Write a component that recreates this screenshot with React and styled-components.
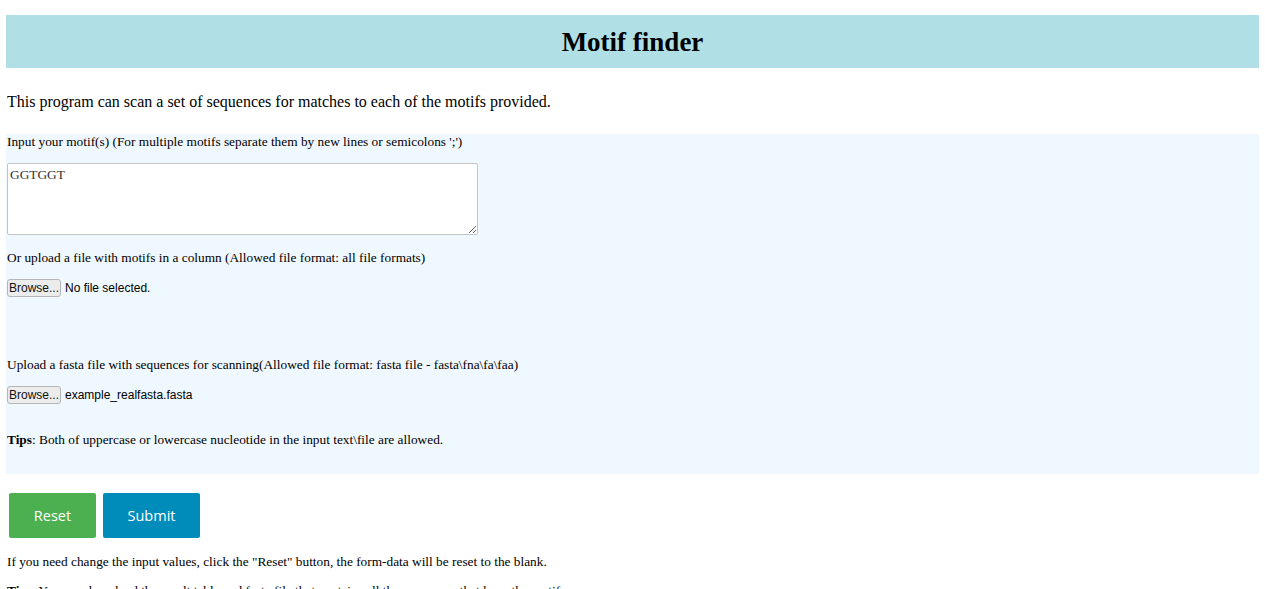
import React, { useState } from 'react';
import styled, { createGlobalStyle } from 'styled-components';

const GlobalStyle = createGlobalStyle`
  html, body {
    margin: 0;
    padding: 0;
    background: #ffffff;
    font-family: "Liberation Serif", "Times New Roman", serif;
    color: #000000;
  }
`;

const Page = styled.div`
  padding: 15px 6px 0 6px;
`;

const Header = styled.header`
  height: 53px;
  background: #b0e0e6;
  display: flex;
  align-items: center;
  justify-content: center;
`;

Header.Title = styled.h1`
  margin: 0;
  font-size: 27px;
  font-weight: bold;
  line-height: 1;
  padding-top: 2px;
`;

const Intro = styled.p`
  margin: 25px 0 0 1px;
  font-size: 16px;
  line-height: 18px;
`;

const Panel = styled.form`
  margin-top: 23px;
  background: #f0f8ff;
  padding: 0 0 27px 1px;
`;

const Line = styled.p`
  margin: ${(p) => p.top || 0}px 0 0 0;
  font-size: 13.33px;
  line-height: 15px;
`;

const Motifs = styled.textarea`
  display: block;
  box-sizing: border-box;
  margin-top: 14px;
  width: 471px;
  height: 72px;
  padding: 3px 2px;
  border: 1px solid #c4c4c4;
  border-radius: 2px;
  background: #ffffff;
  font-family: "Liberation Serif", "Times New Roman", serif;
  font-size: 13.33px;
  line-height: 15px;
  color: #333;
  resize: both;
  outline: none;
`;

const FileRow = styled.div`
  display: flex;
  align-items: center;
  gap: 4px;
  margin-top: ${(p) => p.top}px;
  height: 18px;
  font-family: "Liberation Sans", Arial, sans-serif;
  font-size: 12px;
`;

FileRow.Browse = styled.button`
  box-sizing: border-box;
  height: 18px;
  padding: 0 1px;
  border: 1px solid #b5b5b5;
  border-radius: 3px;
  background: #ececec;
  font-family: "Liberation Sans", Arial, sans-serif;
  font-size: 12px;
  color: #111;
  line-height: 16px;
  cursor: pointer;
`;

const Actions = styled.div`
  display: flex;
  gap: 7px;
  margin: 19px 0 0 3px;
`;

const ActionButton = styled.button`
  box-sizing: border-box;
  width: ${(p) => p.width}px;
  height: 45px;
  border: none;
  border-radius: 2px;
  background: ${(p) => p.color};
  color: #ffffff;
  font-family: "Open Sans", "Noto Sans", sans-serif;
  font-size: 14.5px;
  cursor: pointer;
`;

const Note = styled.p`
  margin: ${(p) => p.top}px 0 0 1px;
  font-size: 13.33px;
  line-height: 15px;
`;

function App() {
  const [motifs, setMotifs] = useState('GGTGGT');

  return (
    <>
      <GlobalStyle />
      <Page>
        <Header>
          <Header.Title>Motif finder</Header.Title>
        </Header>

        <Intro>
          This program can scan a set of sequences for matches to each of the motifs provided.
        </Intro>

        <Panel onSubmit={(e) => e.preventDefault()}>
          <Line>
            Input your motif(s) (For multiple motifs separate them by new lines or semicolons &apos;;&apos;)
          </Line>
          <Motifs
            name="motifs"
            value={motifs}
            onChange={(e) => setMotifs(e.target.value)}
          />
          <Line top={15}>
            Or upload a file with motifs in a column (Allowed file format: all file formats)
          </Line>
          <FileRow top={14}>
            <FileRow.Browse type="button">Browse...</FileRow.Browse>
            <span>No file selected.</span>
          </FileRow>

          <Line top={60}>
            Upload a fasta file with sequences for scanning(Allowed file format: fasta file - fasta\fna\fa\faa)
          </Line>
          <FileRow top={14}>
            <FileRow.Browse type="button">Browse...</FileRow.Browse>
            <span>example_realfasta.fasta</span>
          </FileRow>

          <Line top={28}>
            <b>Tips</b>: Both of uppercase or lowercase nucleotide in the input text\file are allowed.
          </Line>
        </Panel>

        <Actions>
          <ActionButton type="button" width={87} color="#4caf50" onClick={() => setMotifs('')}>
            Reset
          </ActionButton>
          <ActionButton type="button" width={97} color="#008cba">
            Submit
          </ActionButton>
        </Actions>

        <Note top={16}>
          If you need change the input values, click the &quot;Reset&quot; button, the form-data will be reset to the blank.
        </Note>
        <Note top={14}>
          <b>Tips</b>: You can download the result table and fasta file that contains all the sequences that have the motifs.
        </Note>
      </Page>
    </>
  );
}

export default App;
